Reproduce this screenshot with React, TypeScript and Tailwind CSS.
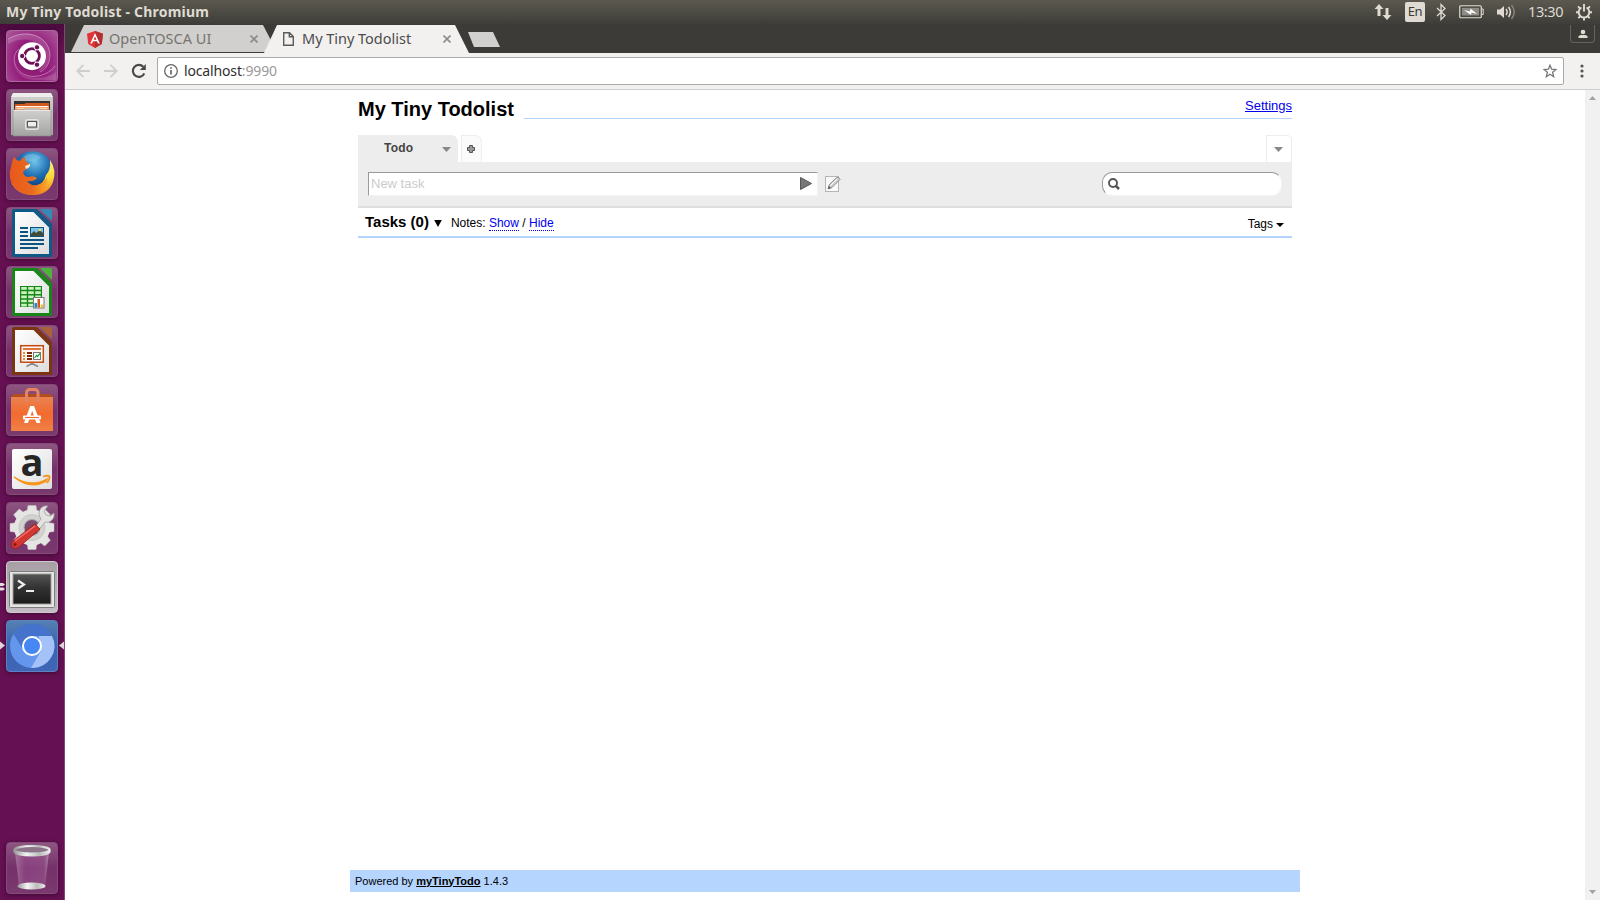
import type { ReactNode } from 'react';

const ui = "font-['Noto_Sans','Open_Sans',sans-serif]";

function Tile({ children, tone = 'glass' }: { children: ReactNode; tone?: 'glass' | 'ubuntu' | 'grey' | 'blue' }) {
  const tones = {
    glass: 'bg-linear-to-b from-[#8d5680] via-[#75306a] to-[#7a3a6e] border-[#86497b]',
    ubuntu: 'bg-radial-[at_50%_60%] from-[#8a1a70] via-[#951f7c] to-[#ac5b9c] border-[#b066a2]',
    grey: 'bg-linear-to-b from-[#a79ea6] to-[#c5bdc4] border-[#cfc8ce]',
    blue: 'bg-linear-to-b from-[#5480b2] via-[#3a63ad] to-[#4067b8] border-[#5b82c2]',
  };
  return (
    <div className={`h-[52px] w-[52px] shrink-0 rounded-[4px] border shadow-[0_1px_4px_rgba(0,0,0,0.4)] ${tones[tone]}`}>
      <svg viewBox="0 0 52 52" className="-m-px block h-[52px] w-[52px] overflow-visible">
        {children}
      </svg>
    </div>
  );
}

function Gradients() {
  return (
    <svg width="0" height="0" className="absolute">
      <defs>
        <linearGradient id="paper" x1="0" y1="0" x2="1" y2="1"><stop offset="0" stopColor="#fff" /><stop offset="1" stopColor="#dedede" /></linearGradient>
        <linearGradient id="steel" x1="0" y1="0" x2="0" y2="1"><stop offset="0" stopColor="#d2d2d0" /><stop offset="1" stopColor="#a3a3a1" /></linearGradient>
        <linearGradient id="bag" x1="0" y1="0" x2="0" y2="1"><stop offset="0" stopColor="#e98350" /><stop offset="0.5" stopColor="#f26a2e" /><stop offset="1" stopColor="#f08045" /></linearGradient>
        <radialGradient id="globe" cx="0.55" cy="0.25" r="0.7"><stop offset="0" stopColor="#6ec4ea" /><stop offset="0.5" stopColor="#1e6cb0" /><stop offset="1" stopColor="#0a2b66" /></radialGradient>
        <linearGradient id="fox" x1="0" y1="0" x2="1" y2="0"><stop offset="0" stopColor="#e8581c" /><stop offset="0.6" stopColor="#e96a1f" /><stop offset="1" stopColor="#f9a825" /></linearGradient>
        <linearGradient id="tail" x1="0" y1="0" x2="0" y2="1"><stop offset="0" stopColor="#fff27a" /><stop offset="0.5" stopColor="#fbd635" /><stop offset="1" stopColor="#ef7a1f" /></linearGradient>
        <linearGradient id="screen" x1="0" y1="0" x2="0" y2="1"><stop offset="0" stopColor="#555" /><stop offset="0.45" stopColor="#333" /><stop offset="1" stopColor="#1c1c1c" /></linearGradient>
        <linearGradient id="rim" x1="0" y1="0" x2="1" y2="0"><stop offset="0" stopColor="#999" /><stop offset="0.35" stopColor="#f5f5f5" /><stop offset="0.7" stopColor="#bbb" /><stop offset="1" stopColor="#eee" /></linearGradient>
        <linearGradient id="bin" x1="0" y1="0" x2="1" y2="0"><stop offset="0" stopColor="#b888ae" stopOpacity="0.7" /><stop offset="0.3" stopColor="#a2579a" stopOpacity="0.4" /><stop offset="0.85" stopColor="#9c5d92" stopOpacity="0.5" /><stop offset="1" stopColor="#c39abb" stopOpacity="0.8" /></linearGradient>
      </defs>
    </svg>
  );
}

function OfficePage({ edge, fold, children }: { edge: string; fold: string; children: ReactNode }) {
  return (
    <>
      <path d="M8 2H28L46 20V48Q46 50 44 50H8Q6 50 6 48V4Q6 2 8 2Z" fill={edge} />
      <path d="M28 2H31L46 17V20Z" fill={edge} />
      <path d="M34 2H44Q46 2 46 4V14Z" fill={fold} />
      <path d="M9 5H27.5L43 20.5V47H9Z" fill="url(#paper)" />
      {children}
    </>
  );
}

function Launcher() {
  return (
    <aside className="relative flex w-[65px] shrink-0 flex-col items-start justify-between border-r border-[#84477a] bg-linear-to-b from-[#4c0a3f] via-[#661052] via-[3%] to-[#641052] pt-[6px] pb-[6px] pl-[6px]">
      <div className="flex flex-col gap-[7px]">
        <Tile tone="ubuntu">
          <path d="M2 9C16 -1 42 2 44 24C44 34 39 40 32 41L40 30C40 14 22 3 2 14Z" fill="#fff" opacity="0.16" />
          <path d="M14 14C2 24 6 44 24 47C36 49 45 46 50 42L50 50H30C10 50 2 32 10 18Z" fill="#fff" opacity="0.14" />
          <g fill="none" stroke="#ecd0e6" strokeOpacity="0.5" strokeWidth="0.9">
            <path d="M2 9C18 -1 42 4 44 24C44 34 40 39 34 42" />
            <path d="M13 19C4 26 8 43 23 46C35 48 45 42 49 36" />
          </g>
          <circle cx="26" cy="27" r="14" fill="#4a0a3c" opacity="0.35" />
          <circle cx="26" cy="26.2" r="14" fill="#fff" />
          <circle cx="26" cy="26" r="7.4" fill="none" stroke="#6d0f57" strokeWidth="2.8" />
          <path d="M26 26L12 26M26 26L32 15.6M26 26L32 36.4" stroke="#fff" strokeWidth="0.9" />
          {[[16.2, 26], [31, 17.3], [31, 34.7]].map(([x, y]) => (
            <circle key={`${x}-${y}`} cx={x} cy={y} r="2.7" fill="#6d0f57" stroke="#fff" strokeWidth="1" />
          ))}
        </Tile>
        <Tile>
          <path d="M7 4H45L47 9V46H5V9Z" fill="url(#steel)" />
          <path d="M7 4H45L47 8H5Z" fill="#ededeb" />
          <rect x="8" y="12" width="36" height="10" fill="#333" />
          <path d="M9 15H18L20 14H43V21H9Z" fill="#d25a20" />
          <path d="M9 17H43V21H9Z" fill="#f6a868" />
          <path d="M10 17.500H42" stroke="#fff" strokeWidth="0.9" />
          <path d="M11 19.500H41" stroke="#ffe4c8" strokeWidth="0.8" />
          <path d="M7 21H17L18 20H34L35 21H45V47H7Z" fill="url(#steel)" stroke="#8c8c8a" strokeWidth="0.6" />
          <path d="M7.5 21.5H44.5" stroke="#e8e8e6" />
          <rect x="19.7" y="30.7" width="12.6" height="9.6" rx="1.8" fill="#aaa" stroke="#e3e3e1" strokeWidth="1.4" />
          <rect x="21.5" y="32.5" width="9" height="5.5" fill="#eee" stroke="#555" />
        </Tile>
        <Tile>
          <circle cx="26.5" cy="24.5" r="21.3" fill="url(#globe)" />
          <path d="M20 7Q29 4 35 9Q32 14 25 13Q20 12 18 15Q13 12 20 7Z" fill="#81c8e9" opacity="0.5" />
          <path d="M44 12Q51 22 47 34Q42 47 27 47Q11 47 5 34Q18 45 31 39Q38 35 40 27Q45 22 44 12Z" fill="url(#tail)" />
          <path d="M8 9Q10 12 14 13Q17 9 19 9Q18 14 24 16Q25 19 20 21L17 24Q18 29 23 29Q27 27 31 30Q27 34 21 33Q24 38 31 37Q38 35 41 29Q43 40 34 45Q20 50 9 40Q1 31 5 19Q6 13 8 9Z" fill="url(#fox)" />
          <path d="M19 18L24 16Q25 19 20 21Z" fill="#fcebd2" />
        </Tile>
        <Tile>
          <OfficePage edge="#0c5a85" fold="#3589b5">
            <path d="M14 21H22M14 25H22M14 29H22M14 33H38M14 37H38M14 41H32" stroke="#0c5580" strokeWidth="2" />
            <rect x="24.5" y="20.5" width="13" height="9" fill="#7cc1e8" stroke="#0c5580" />
            <path d="M25 29V27L28 24L30 26L34 23L37 26V29Z" fill="#444b35" />
            <circle cx="34" cy="23" r="1.2" fill="#f6df59" />
          </OfficePage>
        </Tile>
        <Tile>
          <OfficePage edge="#168617" fold="#4cb43c">
            <path d="M14 20H36V41H14Z" fill="#168617" />
            {[20.2, 24.4, 28.6, 32.8, 37].map((y) => (
              <path key={y} d={`M15.2 ${y + 2.2}h5.6M22.2 ${y + 2.2}h5.6M29.2 ${y + 2.2}h5.6`} stroke="#c8f2bf" strokeWidth="2.7" />
            ))}
            <rect x="27.5" y="31.5" width="10.5" height="10.5" fill="#fff" stroke="#777" />
            <path d="M28.5 41.5V37H31V41.5Z" fill="#1788d1" />
            <path d="M31.5 41.5V33H34V41.5Z" fill="#d3561d" />
            <path d="M34.8 41.5V38.5H37.3V41.5Z" fill="#efbc20" />
          </OfficePage>
        </Tile>
        <Tile>
          <OfficePage edge="#7b3510" fold="#ab6238">
            <path d="M26 38V40M20.500 41.500L26 38.500L32 41.500" fill="none" stroke="#888" strokeWidth="1.6" />
            <rect x="14.7" y="20.7" width="22.6" height="16.500" fill="#fff7ef" stroke="#c34b12" strokeWidth="1.5" />
            <path d="M17 24H35" stroke="#d8662c" strokeWidth="1.8" />
            <path d="M21 28H26M21 31H26M21 34H26" stroke="#7b2c08" strokeWidth="1.8" />
            <path d="M17 28h2M17 31h2M17 34h2" stroke="#e58a4f" strokeWidth="1.8" />
            <rect x="27.5" y="27.5" width="7" height="7" fill="#fff" stroke="#777" />
            <path d="M28.5 33L30.5 30.5L31.5 31.5L34 28.5" fill="none" stroke="#22a33a" strokeWidth="1.2" />
          </OfficePage>
        </Tile>
        <Tile>
          <path d="M5 13L7 10H45L47 13Z" fill="#b34d1e" />
          <path d="M5 13H47V47H5Z" fill="url(#bag)" />
          <path d="M20.5 18V9Q20.5 5.500 24 5.500H28.500Q32 5.500 32 9V18" fill="none" stroke="#e58261" strokeWidth="3" />
          <path d="M18 39L24.2 22H28L34.5 39H30.5L26.200 27L22 39Z" fill="#fff" />
          <rect x="17" y="31.500" width="18" height="4" rx="1" fill="#fff" />
          <path d="M19 33.5H33" stroke="#f26a2e" strokeWidth="1.1" />
        </Tile>
        <Tile>
          <rect x="6" y="6" width="40" height="40" rx="2" fill="url(#paper)" />
          <text x="26" y="33" textAnchor="middle" fontFamily="Open Sans" fontWeight="700" fontSize="38" fill="#262626">a</text>
          <path d="M8 34Q25 45 41 36L40 38.500Q24 47 8 34Z" fill="#f6961d" stroke="#f6961d" strokeWidth="1.400" />
          <path d="M37 33.5Q42 32 43.5 33.5Q44 36 41 40" fill="none" stroke="#f6961d" strokeWidth="1.8" />
        </Tile>
        <Tile>
          <g fill="#e5e5e3" stroke="#c4c4c2" strokeWidth="0.5">
            {[0, 45, 90, 135].map((a) => (
              <path key={a} d="M22 3.500H30L31 10V40L30 47.500H22L21 40V10Z" transform={`rotate(${a} 26 25.5)`} />
            ))}
          </g>
          <circle cx="26" cy="25.5" r="18" fill="#e5e5e3" />
          <circle cx="26" cy="25.5" r="13" fill="#d2d2d0" stroke="#bbb" strokeWidth=".6" />
          <circle cx="26" cy="25.5" r="8" fill="#7c496f" stroke="#aaa" />
          <path d="M28 27L35 17Q31 11 35 6Q38 3 42 4L38 9L40 13L44 14L48 11Q49 16 45 19Q42 21 39 20L31 30Z" fill="#e3e3e1" stroke="#999" strokeWidth="0.7" />
          <path d="M29 22L34 27L13 45Q9 48 6 45Q4 42 7 39Z" fill="#d43631" stroke="#9c1d1a" strokeWidth="0.8" />
          <path d="M9 39L29 24" stroke="#f07772" strokeWidth="1.3" />
          <circle cx="9" cy="42.5" r="1.5" fill="#851713" />
        </Tile>
        <Tile tone="grey">
          <rect x="3.5" y="10.5" width="45" height="36" rx="1" fill="#e6e6e4" stroke="#7c7c7a" />
          <rect x="7" y="13" width="38" height="30" fill="url(#screen)" stroke="#999" />
          <path d="M12 19.5L18 23.5L12 27.5" fill="none" stroke="#eee" strokeWidth="2.2" />
          <path d="M20 30H28" stroke="#eee" strokeWidth="2" />
        </Tile>
        <Tile tone="blue">
          <circle cx="26" cy="26" r="22" fill="#6596ee" />
          <path d="M7.5 14A22 22 0 0 1 46 16H26L16 28Z" fill="#4573cb" />
          <path d="M46 16A22 22 0 0 1 25 48L35 31L33 16Z" fill="#a4c2f7" />
          <circle cx="26" cy="26" r="9" fill="#4587f3" stroke="#fff" strokeWidth="2" />
        </Tile>
      </div>
      <Tile>
        <path d="M9 10H43L39 44H13Z" fill="url(#bin)" />
        <ellipse cx="25.5" cy="44" rx="14" ry="3.6" fill="url(#rim)" />
        <path d="M7.500 8V10.500Q10 14.500 26 14.500Q42 14.500 44.500 10.500V8Z" fill="url(#rim)" />
        <ellipse cx="26" cy="7.800" rx="17.500" ry="3.800" fill="#8d7589" stroke="url(#rim)" strokeWidth="2.200" />
      </Tile>
      <svg viewBox="0 0 64 80" className="absolute top-[555px] left-0 h-[80px] w-[64px]">
        <path d="M0 4H3L5 5.5L3 7H0ZM0 8.5H3L5 10L3 11.5H0Z" fill="#e3dce2" />
        <path d="M0 62.500L5 66.500L0 70.500ZM64 62.500L59 66.500L64 70.500Z" fill="#ddd5db" />
      </svg>
    </aside>
  );
}

function Indicators() {
  return (
    <div className="flex items-center text-[#dfdbd2]">
      <svg viewBox="0 0 18 18" className="mr-[13px] h-[18px] w-[18px]" fill="#dfdbd2">
        <path d="M5 1L9.500 6H6.500V13H3.500V6H.5ZM13 17L17.500 12H14.500V5H11.500V12H8.500Z" />
      </svg>
      <span className="mr-[11px] flex h-[20px] w-[20px] items-center justify-center rounded-[2px] bg-[#dfdbd2] text-[13px] tracking-[-0.5px] text-[#3c3b37]">En</span>
      <svg viewBox="0 0 10 18" className="mr-[13px] h-[18px] w-[10px]" fill="none" stroke="#dfdbd2" strokeWidth="1.3">
        <path d="M1 5L9 12.500L5 16.500V1.500L9 5.500L1 13" />
      </svg>
      <svg viewBox="0 0 25 14" className="mr-[12px] h-[14px] w-[25px]">
        <rect x=".75" y=".75" width="21.500" height="12" rx="1" fill="none" stroke="#dfdbd2" strokeWidth="1.200" />
        <rect x="3" y="3" width="17" height="7.500" fill="#8e8c85" />
        <path d="M22.500 4H24.200V9.500H22.500" fill="none" stroke="#dfdbd2" strokeWidth="1" />
        <path d="M5 5L11 6.500L11.500 3.500L18 9L12.500 7.500L12 10Z" fill="#fff" />
      </svg>
      <svg viewBox="0 0 20 18" className="mr-[12px] h-[18px] w-[20px]" fill="none" strokeWidth="1.5">
        <path d="M1 6.500H4L8 3V15L4 11.500H1Z" fill="#dfdbd2" />
        <path d="M10 6Q12.300 9 10 12M12.500 4Q16.300 9 12.500 14" stroke="#dfdbd2" />
        <path d="M15.500 2Q21 9 15.500 16" stroke="#85837c" />
      </svg>
      <span className="mr-[11px] w-[36px] text-[14.500px] tracking-[-0.4px]">13:30</span>
      <svg viewBox="0 0 18 18" className="h-[18px] w-[18px]" fill="none" stroke="#dfdbd2" strokeWidth="1.9">
        <path d="M6.500 4.500A5.300 5.300 0 1 0 11.500 4.500M9 1V8.500" />
        <path d="M1 9.300H4M14 9.300H17M3 3.300L5.500 5.800M15 3.300L12.500 5.800M3.300 15.200L5.500 13M14.700 15.200L12.500 13M9 14.500V17.500" />
      </svg>
    </div>
  );
}

function Close() {
  return (
    <svg viewBox="0 0 8 8" className="h-[8px] w-[8px]" stroke="#8c8b89" strokeWidth="1.6"><path d="M.5 .5L7.500 7.500M7.500 .5L.5 7.500" /></svg>
  );
}

function TabStrip() {
  return (
    <div className="flex h-[29px] justify-between bg-[#3c3b37] pt-px pl-[6px]">
      <div className="flex">
        <div className="flex h-[27px] w-[206px] items-center bg-[#d2d0ce] pr-[19px] pl-[16px] [clip-path:polygon(0_100%,13px_0,192px_0,206px_100%)]">
          <svg viewBox="0 0 16 17" className="mt-[1px] h-[17px] w-[16px] shrink-0">
            <path d="M8 0L16 2.800L14.800 13L8 17L1.200 13L0 2.800Z" fill="#e23237" />
            <path d="M8 0L16 2.800L14.800 13L8 17Z" fill="#b52e31" />
            <path d="M8 2L3.200 12.500H5L6 10.200H10L11 12.500H12.800ZM8 5.500L9.400 8.700H6.600Z" fill="#fff" fillRule="evenodd" />
          </svg>
          <span className="ml-[6px] grow text-[14.500px] tracking-[0.02px] whitespace-nowrap text-[#76746f]">OpenTOSCA UI</span>
          <Close />
        </div>
        <div className="-ml-[13px] flex h-[28px] w-[205px] items-center bg-[#f2f1f0] pr-[18px] pl-[19px] [clip-path:polygon(0_100%,13px_0,191px_0,205px_100%)]">
          <svg viewBox="0 0 11 14" className="h-[14px] w-[11px] shrink-0" fill="none" stroke="#5c5b59" strokeWidth="1.400"><path d="M.7 .7H6.500L10.300 4.500V13.300H.7ZM6.300 .7V4.700H10.300" /></svg>
          <span className="ml-[8px] grow text-[14.500px] tracking-[-0.02px] whitespace-nowrap text-[#4c4c4c]">My Tiny Todolist</span>
          <Close />
        </div>
        <div className="mt-[7px] -ml-px h-[15px] w-[32px] bg-[#d2d0ce] [clip-path:polygon(0_0,25px_0,100%_100%,6px_100%)]" />
      </div>
      <div className="mr-[5px] flex h-[18px] w-[25px] items-center justify-center rounded-b-[4px] border border-t-0 border-[#65645f]">
        <svg viewBox="0 0 10 10" className="h-[10px] w-[10px]" fill="#dfdbd2"><circle cx="5" cy="3" r="2.300" /><path d="M.5 9V7.500Q1 6 3 6H7Q9 6 9.500 7.500V9Z" /></svg>
      </div>
    </div>
  );
}

function Toolbar() {
  return (
    <div className="flex h-[37px] items-center border-b border-[#cfcdcb] bg-[#f2f1f0] pl-[11px]">
      <svg viewBox="0 0 14 14" className="h-[14px] w-[14px]" fill="none" stroke="#cfcecc" strokeWidth="1.900"><path d="M14 7H1.500M7.500 .8L1.300 7L7.500 13.200" /></svg>
      <svg viewBox="0 0 14 14" className="ml-[14px] h-[14px] w-[14px]" fill="none" stroke="#cfcecc" strokeWidth="1.900"><path d="M0 7H12.500M6.500 .8L12.700 7L6.500 13.200" /></svg>
      <svg viewBox="0 0 16 16" className="ml-[13px] h-[16px] w-[16px]"><path d="M13.300 10.500A6 6 0 1 1 12.300 3.800" fill="none" stroke="#494947" strokeWidth="2.100" /><path d="M14.800 1V7H8.800Z" fill="#494947" /></svg>
      <div className="ml-[10px] flex h-[28px] w-[1407px] items-center rounded-[2px] border border-[#aaa9a6] bg-white pr-[6px] pl-[6px]">
        <svg viewBox="0 0 14 14" className="h-[14px] w-[14px]" fill="none" stroke="#666" strokeWidth="1.300"><circle cx="7" cy="7" r="6.300" /><path d="M7 6V10.500M7 3.200V4.700" strokeWidth="1.700" /></svg>
        <span className="ml-[6px] grow pb-[2px] text-[14px] tracking-[-0.15px] text-[#2f2f2f]">localhost<span className="text-[#999]">:9990</span></span>
        <svg viewBox="0 0 14 14" className="h-[14px] w-[14px]" fill="none" stroke="#757575" strokeWidth="1.300"><path d="M7 1.200L8.600 5.200L13 5.500L9.600 8.300L10.700 12.700L7 10.300L3.300 12.700L4.400 8.300L1 5.500L5.400 5.200Z" /></svg>
      </div>
      <svg viewBox="0 0 4 14" className="ml-[16px] h-[14px] w-[4px]" fill="#555"><circle cx="2" cy="2" r="1.600" /><circle cx="2" cy="7" r="1.600" /><circle cx="2" cy="12" r="1.600" /></svg>
    </div>
  );
}

function Caret({ color }: { color: string }) {
  return <svg viewBox="0 0 9 5" className="h-[5px] w-[9px]"><path d="M0 0H9L4.500 5Z" fill={color} /></svg>;
}

function Todo() {
  return (
    <main className="flex grow flex-col bg-white font-['Liberation_Sans',Arial,sans-serif] text-[12px] leading-none text-black">
      <div className="mt-[6px] ml-[293px] w-[934px]">
        <header className="flex h-[22px]">
          <h1 className="w-[166px] shrink-0 pt-[2px] text-[20px] leading-[22px] font-bold whitespace-nowrap">My Tiny Todolist</h1>
          <div className="flex h-[23px] grow justify-end border-b border-[#b5d5ff]">
            <a className="pt-[2px] text-[13px] leading-[15px] text-[#0000ee] underline">Settings</a>
          </div>
        </header>
        <div className="mt-[17px] flex h-[27px]">
          <div className="flex w-[100px] items-center rounded-tr-[7px] bg-[#ededed] pb-[1px] pl-[26px]">
            <span className="w-[57.500px] text-[12px] font-bold tracking-[0.2px] text-[#444]">Todo</span>
            <svg viewBox="0 0 9 5" className="mt-[2px] h-[5px] w-[9px]"><path d="M0 0H9L4.500 5Z" fill="#888" /></svg>
          </div>
          <div className="ml-[3px] flex w-[21px] items-center justify-center rounded-tr-[7px] border border-b-0 border-[#ededed] bg-[#fbfbfb] pr-[1px] pb-[1px]">
            <svg viewBox="0 0 8 8" className="h-[8px] w-[8px]"><path d="M2.500 .5H5.500V2.500H7.500V5.500H5.500V7.500H2.500V5.500H.5V2.500H2.500Z" fill="#999" stroke="#555" /></svg>
          </div>
          <div className="ml-auto flex w-[26px] items-center justify-center rounded-tr-[5px] border border-b-0 border-[#ededed] pt-[1px] pr-[1px]"><Caret color="#888" /></div>
        </div>
        <div className="flex h-[46px] items-start border-b-2 border-[#dedede] bg-[#ededed] pt-[10px] pr-[10px] pl-[10px]">
          <div className="flex h-[24px] w-[450px] items-center justify-between border border-t-[#999] border-r-[#f3f3f3] border-b-[#f3f3f3] border-l-[#999] bg-white pr-[5px] pb-[1px] pl-[2px]">
            <span className="text-[13px] text-[#ccc]">New task</span>
            <svg viewBox="0 0 12 13" className="h-[13px] w-[12px]"><path d="M.5 .5L11.500 6.500L.5 12.500Z" fill="#777" stroke="#555" /></svg>
          </div>
          <svg viewBox="0 0 16 16" className="mt-[4px] ml-[7px] h-[16px] w-[16px]">
            <rect x=".5" y=".5" width="13" height="15" fill="#fafafa" stroke="#b5b5b5" />
            <path d="M3 13L4 9L11.500 1.500Q14 .5 15 3.500L7 11.500Z" fill="#ccc" stroke="#858585" strokeWidth=".9" />
            <path d="M3.200 12.800L4 10.200L5.800 12Z" fill="#444" />
            <path d="M5.500 9.500L12.500 2.800" stroke="#fff" strokeWidth="1" />
          </svg>
          <div className="ml-auto flex h-[24px] w-[180px] items-center rounded-[10px] border border-t-[#999] border-r-[#f4f4f4] border-b-[#f4f4f4] border-l-[#999] bg-white pb-[1px] pl-[5px]">
            <svg viewBox="0 0 12 12" className="h-[12px] w-[12px]" fill="none" stroke="#555"><circle cx="5" cy="5" r="4" strokeWidth="1.900" /><path d="M7.500 7.500L11 11" strokeWidth="2.500" /></svg>
          </div>
        </div>
        <div className="flex h-[30px] items-center border-b-2 border-[#b5d5ff] pr-[8px] pl-[7px]">
          <span className="pb-[2px] text-[15px] font-bold whitespace-nowrap">Tasks (0)</span>
          <svg viewBox="0 0 8 7" className="mt-[2px] ml-[5px] h-[7px] w-[8px]"><path d="M.2 0H7.800L4 7Z" /></svg>
          <span className="ml-[9px] pt-[1px] text-[12px] whitespace-nowrap">Notes: <a className="border-b border-dotted border-[#0000ee] text-[#0000ee]">Show</a> / <a className="border-b border-dotted border-[#0000ee] text-[#0000ee]">Hide</a></span>
          <span className="ml-auto flex items-center gap-[3px] pt-[3px]">Tags <svg viewBox="0 0 8 4" className="mt-[2px] h-[4px] w-[8px]"><path d="M0 0H8L4 4Z" /></svg></span>
        </div>
      </div>
      <footer className="mt-auto mb-[8px] ml-[285px] flex h-[22px] w-[950px] items-center bg-[#b5d5ff] pl-[5px] text-[11px]">
        <span>Powered by <a className="font-bold underline">myTinyTodo</a> 1.4.3</span>
      </footer>
    </main>
  );
}

export default function App() {
  return (
    <div className={`flex h-[900px] w-[1600px] flex-col overflow-hidden bg-white ${ui}`}>
      <Gradients />
      <div className="flex h-[24px] shrink-0 items-center justify-between bg-linear-to-b from-[#5b594f] to-[#3e3d39] pr-[7px] pl-[6px]">
        <span className="pb-[2px] text-[14px] font-bold tracking-[0.19px] text-[#dfdbd2]">My Tiny Todolist - Chromium</span>
        <Indicators />
      </div>
      <div className="flex min-h-0 grow">
        <Launcher />
        <div className="flex grow flex-col">
          <TabStrip />
          <Toolbar />
          <div className="flex grow">
            <Todo />
            <div className="flex w-[15px] shrink-0 flex-col items-center justify-between bg-[#f1f1f1] pt-[6px] pb-[6px]">
              <svg viewBox="0 0 7 4" className="h-[4px] w-[7px]" fill="#a3a3a3"><path d="M0 4H7L3.500 0Z" /></svg>
              <svg viewBox="0 0 7 4" className="h-[4px] w-[7px]" fill="#a3a3a3"><path d="M0 0H7L3.500 4Z" /></svg>
            </div>
          </div>
        </div>
      </div>
    </div>
  );
}
